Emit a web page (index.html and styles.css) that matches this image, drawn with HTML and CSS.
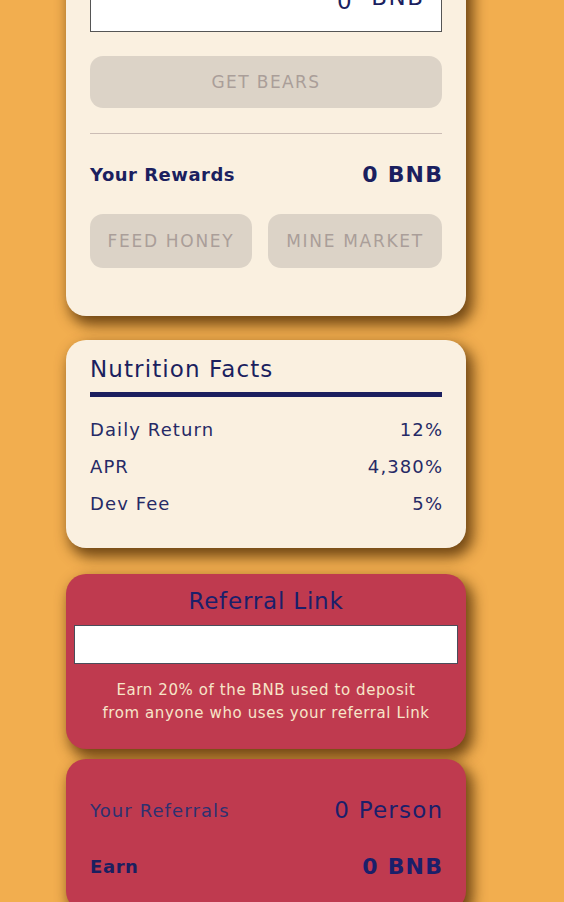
FILE: index.html
```html
<!DOCTYPE html>
<html>
<head>
<meta charset="utf-8">
<link rel="stylesheet" href="styles.css">
</head>
<body>
<main class="column">
  <section class="card cream buy-card">
    <div class="amount-input">
      <span class="amount-value">0</span>
      <span class="amount-unit">BNB</span>
    </div>
    <button class="btn btn-wide">GET BEARS</button>
    <hr class="divider">
    <div class="reward-row">
      <span class="reward-label">Your Rewards</span>
      <span class="reward-value">0 BNB</span>
    </div>
    <div class="btn-pair">
      <button class="btn btn-half feed">FEED HONEY</button>
      <button class="btn btn-half mine">MINE MARKET</button>
    </div>
  </section>

  <section class="card cream facts-card">
    <h2 class="facts-title">Nutrition Facts</h2>
    <div class="facts-bar"></div>
    <div class="fact-row"><span>Daily Return</span><span class="fact-value">12%</span></div>
    <div class="fact-row"><span>APR</span><span class="fact-value">4,380%</span></div>
    <div class="fact-row"><span>Dev Fee</span><span class="fact-value">5%</span></div>
  </section>

  <section class="card red referral-card">
    <h2 class="referral-title">Referral Link</h2>
    <div class="referral-input"></div>
    <p class="referral-note">Earn 20% of the BNB used to deposit<br>from anyone who uses your referral Link</p>
  </section>

  <section class="card red earn-card">
    <div class="earn-row">
      <span class="earn-label">Your Referrals</span>
      <span class="earn-value">0 Person</span>
    </div>
    <div class="earn-row strong">
      <span class="earn-label">Earn</span>
      <span class="earn-value">0 BNB</span>
    </div>
  </section>
</main>
</body>
</html>
```

FILE: styles.css
```css
html, body {
  margin: 0;
  padding: 0;
  background: #f2ae4f;
  overflow: hidden;
}

body {
  font-family: "DejaVu Sans", "Noto Sans", sans-serif;
  color: #1b1f5f;
}

.column {
  width: 400px;
  margin: -44px 0 0 66px;
  display: flex;
  flex-direction: column;
}

.card {
  box-sizing: border-box;
  border-radius: 20px;
  box-shadow: 5px 7px 14px 2px rgba(80, 45, 5, 0.8);
}

.cream { background: #faf0e0; }
.red { background: #bf3a4f; }

/* Card 1 */
.buy-card {
  padding: 24px 24px 48px;
}

.amount-input {
  height: 52px;
  box-sizing: border-box;
  background: #fff;
  border: 1px solid #555;
  display: flex;
  align-items: flex-start;
  justify-content: flex-end;
  gap: 18px;
  padding-right: 18px;
  font-size: 23px;
  line-height: 27px;
  letter-spacing: 1.5px;
  color: #1b1f5f;
}

.amount-value { padding-top: 7px; }
.amount-unit { padding-top: 3px; margin-right: -1.5px; }

.btn {
  font-family: inherit;
  border: none;
  background: #dcd3c7;
  color: #aa9e99;
  border-radius: 13px;
  font-size: 17px;
  padding: 0;
}

.btn-wide {
  display: block;
  width: 100%;
  height: 52px;
  margin-top: 24px;
  letter-spacing: 1.4px;
}

.divider {
  border: none;
  border-top: 1px solid #cbbdb5;
  margin: 25px 0 0;
}

.reward-row {
  display: flex;
  justify-content: space-between;
  align-items: center;
  height: 26px;
  margin-top: 27px;
  font-weight: bold;
}

.reward-label { font-size: 18px; letter-spacing: 0.5px; }
.reward-value { font-size: 22px; letter-spacing: 1.2px; margin-right: -1.2px; }

.btn-pair {
  display: flex;
  gap: 16px;
  margin-top: 27px;
}

.btn-half {
  height: 54px;
  letter-spacing: 1.7px;
}

.feed { width: 162px; }
.mine { flex: 1; }

/* Card 2 */
.facts-card {
  margin-top: 24px;
  padding: 16px 24px 26px;
}

.facts-title {
  margin: 0;
  font-size: 23px;
  font-weight: normal;
  line-height: 26px;
  letter-spacing: 1.1px;
}

.facts-bar {
  height: 5px;
  background: #1b1f5f;
  margin-top: 10px;
  margin-bottom: 14px;
}

.fact-row {
  display: flex;
  justify-content: space-between;
  font-size: 18px;
  line-height: 25px;
  letter-spacing: 1.1px;
  padding: 6px 0;
  color: #262a66;
}

.fact-value { margin-right: -1.1px; }

/* Card 3 */
.referral-card {
  margin-top: 26px;
  padding: 12px 8px 24px;
  text-align: center;
}

.referral-title {
  margin: 0;
  font-size: 23px;
  font-weight: normal;
  line-height: 30px;
  letter-spacing: 0.8px;
  color: #1b1f6a;
}

.referral-input {
  height: 39px;
  box-sizing: border-box;
  background: #fff;
  border: 1px solid #4a4d5a;
  margin-top: 9px;
}

.referral-note {
  margin: 15px 0 0;
  font-size: 15px;
  line-height: 23px;
  letter-spacing: 0.6px;
  color: #f7e5c9;
}

/* Card 4 */
.earn-card {
  margin-top: 10px;
  padding: 36px 24px 30px;
}

.earn-row {
  display: flex;
  justify-content: space-between;
  align-items: center;
  height: 30px;
}

.earn-row + .earn-row { margin-top: 26px; }

.earn-label { font-size: 18px; font-weight: normal; letter-spacing: 1.1px; color: #2e3170; }
.earn-value { font-size: 23px; letter-spacing: 1.2px; margin-right: -1.2px; color: #1b1f6a; }

.strong .earn-label { font-weight: bold; letter-spacing: 0.6px; color: #1b1f5f; }
.strong .earn-value { font-weight: bold; font-size: 22px; }
```
